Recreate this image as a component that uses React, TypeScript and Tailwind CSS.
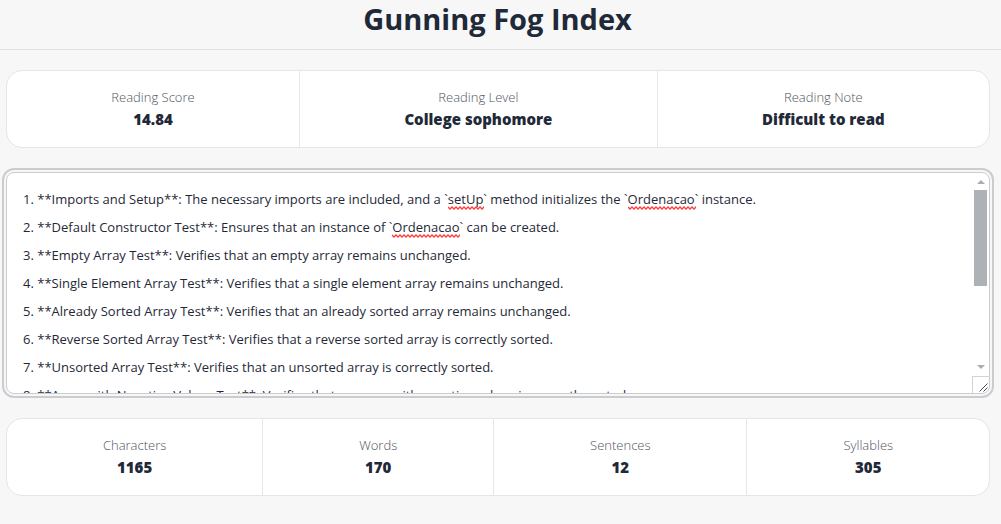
type Stat = { label: string; value: string };

const readingStats: Stat[] = [
  { label: 'Reading Score', value: '14.84' },
  { label: 'Reading Level', value: 'College sophomore' },
  { label: 'Reading Note', value: 'Difficult to read' },
];

const textStats: Stat[] = [
  { label: 'Characters', value: '1165' },
  { label: 'Words', value: '170' },
  { label: 'Sentences', value: '12' },
  { label: 'Syllables', value: '305' },
];

const sampleText = [
  '1. **Imports and Setup**: The necessary imports are included, and a `setUp` method initializes the `Ordenacao` instance.',
  '2. **Default Constructor Test**: Ensures that an instance of `Ordenacao` can be created.',
  '3. **Empty Array Test**: Verifies that an empty array remains unchanged.',
  '4. **Single Element Array Test**: Verifies that a single element array remains unchanged.',
  '5. **Already Sorted Array Test**: Verifies that an already sorted array remains unchanged.',
  '6. **Reverse Sorted Array Test**: Verifies that a reverse sorted array is correctly sorted.',
  '7. **Unsorted Array Test**: Verifies that an unsorted array is correctly sorted.',
  '8. **Array with Negative Values Test**: Verifies that an array with negative values is correctly sorted.',
].join('\n');

function Stats({ items }: { items: Stat[] }) {
  return (
    <dl className="flex divide-x divide-[#e6e6e7] rounded-2xl border border-[#e6e6e7] bg-white">
      {items.map((s) => (
        <div key={s.label} className="flex flex-auto flex-col items-center py-4 text-center">
          <dt className="text-[13px] leading-5 font-light text-[#4f545d]">{s.label}</dt>
          <dd className="text-[15px] leading-6 font-extrabold">{s.value}</dd>
        </div>
      ))}
    </dl>
  );
}

// Wavy line under a word that the spelling checker does not know.
function Squiggle({ className }: { className: string }) {
  const points = Array.from({ length: 40 }, (_, i) => `${i * 2},${i % 2 ? 3 : 1}`).join(' ');
  return (
    <svg aria-hidden="true" className={`pointer-events-none absolute h-1 overflow-hidden ${className}`}>
      <polyline points={points} fill="none" stroke="#ff3b3b" strokeWidth="1.3" />
    </svg>
  );
}

function ScrollBar() {
  return (
    <div aria-hidden="true" className="pointer-events-none absolute inset-y-px right-0 flex w-[18px] flex-col">
      <div className="flex h-[17px] items-center justify-center">
        <svg width="8" height="4" viewBox="0 0 8 4" fill="#a9acb1"><path d="M4 0 8 4H0Z" /></svg>
      </div>
      <div className="mr-[3px] ml-0.5 h-24 bg-[#aeb1b6]" />
      <div className="flex-1" />
      <div className="flex h-[17px] items-center justify-center pb-0.5">
        <svg width="8" height="4" viewBox="0 0 8 4" fill="#a9acb1"><path d="M4 4 0 0H8Z" /></svg>
      </div>
      <div className="flex h-[17px] items-end justify-end border-t border-l border-[#d2d3d5] pr-0.5 pb-px">
        <svg width="9" height="9" viewBox="0 0 9 9" stroke="#4b4b4b" fill="none"><path d="M.5 8.500 8.500.5M4.500 8.500 8.500 4.500" /></svg>
      </div>
    </div>
  );
}

export default function App() {
  return (
    <div className="min-h-screen bg-[#f7f7f7] font-['Open_Sans','Noto_Sans',sans-serif] text-[#1f2937]">
      <header className="border-b border-[#e2e2e3] pt-px pb-3 text-center">
        <h1 className="pr-1.5 text-[29px] leading-9 font-bold">Gunning Fog Index</h1>
      </header>
      <main className="flex flex-col gap-6 pt-5 pr-[11px] pb-7 pl-1.5">
        <Stats items={readingStats} />
        <div className="relative rounded-lg bg-white outline-2 outline-offset-2 outline-[#cbccd0]">
          <textarea
            aria-label="Text to analyze"
            spellCheck={false}
            defaultValue={sampleText}
            className="block h-[222px] w-full resize-none rounded-lg border border-[#cbccd0] py-3 pr-8 pl-4 text-[13px] leading-7 outline-none [scrollbar-width:none]"
          />
          <Squiggle className="top-[34px] left-[442px] w-9" />
          <Squiggle className="top-[34px] left-[622px] w-[68px]" />
          <Squiggle className="top-[62px] left-[386px] w-[68px]" />
          <ScrollBar />
        </div>
        <Stats items={textStats} />
      </main>
    </div>
  );
}
